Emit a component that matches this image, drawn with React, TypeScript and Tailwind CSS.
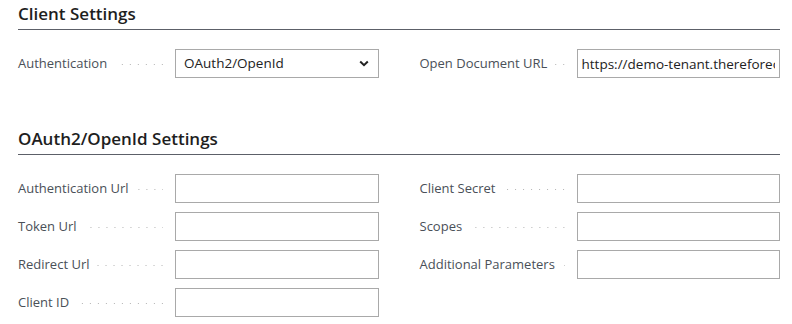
const font = { fontFamily: '"Open Sans", "Noto Sans", sans-serif' }

function Leader() {
  return (
    <span
      className="flex-1 h-px ml-[8px] mr-[12px] mt-[1px] bg-[linear-gradient(to_right,transparent_7px,#b4b4b4_7px)] bg-[length:8px_1px] bg-repeat-x bg-right"
      aria-hidden="true"
    />
  )
}

function Field({ label, value, select }: { label: string; value?: string; select?: boolean }) {
  return (
    <div className="flex items-center h-[29px]">
      <div className="flex items-center w-[157px] shrink-0">
        <span className="text-[13px] text-[#4a5058] whitespace-nowrap">{label}</span>
        <Leader />
      </div>
      {select ? (
        <div className="flex-1 h-[29px] border border-[#a9a9a9] flex items-center justify-between pl-[8px] pr-[9px] text-[13.5px] text-[#222]">
          <span>{value}</span>
          <svg width="10" height="7" viewBox="0 0 10 7" aria-hidden="true">
            <path d="M1.2 1.5 L5 5.2 L8.8 1.5" fill="none" stroke="#222" strokeWidth="2" />
          </svg>
        </div>
      ) : (
        <input
          readOnly
          value={value ?? ''}
          className="flex-1 min-w-0 h-[29px] border border-[#a9a9a9] px-[4px] text-[13.5px] text-[#222] outline-none bg-white"
          style={font}
        />
      )}
    </div>
  )
}

function Heading({ children }: { children: string }) {
  return (
    <h2 className="h-[28px] pb-[3px] border-b border-[#5c6068] text-[17px] leading-[24px] font-[580] text-[#1e1e1e]">
      {children}
    </h2>
  )
}

export default function App() {
  return (
    <div className="w-[792px] h-[324px] bg-white pl-[18px] pr-[12px] pt-[2px] overflow-hidden" style={font}>
      <Heading>Client Settings</Heading>
      <div className="grid grid-cols-2 gap-x-[41px] mt-[19px]">
        <Field label="Authentication" value="OAuth2/OpenId" select />
        <Field label="Open Document URL" value="https://demo-tenant.thereforeonline.com/TWA/" />
      </div>

      <div className="mt-[49px]">
        <Heading>OAuth2/OpenId Settings</Heading>
        <div className="grid grid-cols-2 gap-x-[41px] gap-y-[9px] mt-[19px]">
          <Field label="Authentication Url" />
          <Field label="Client Secret" />
          <Field label="Token Url" />
          <Field label="Scopes" />
          <Field label="Redirect Url" />
          <Field label="Additional Parameters" />
          <Field label="Client ID" />
        </div>
      </div>
    </div>
  )
}
